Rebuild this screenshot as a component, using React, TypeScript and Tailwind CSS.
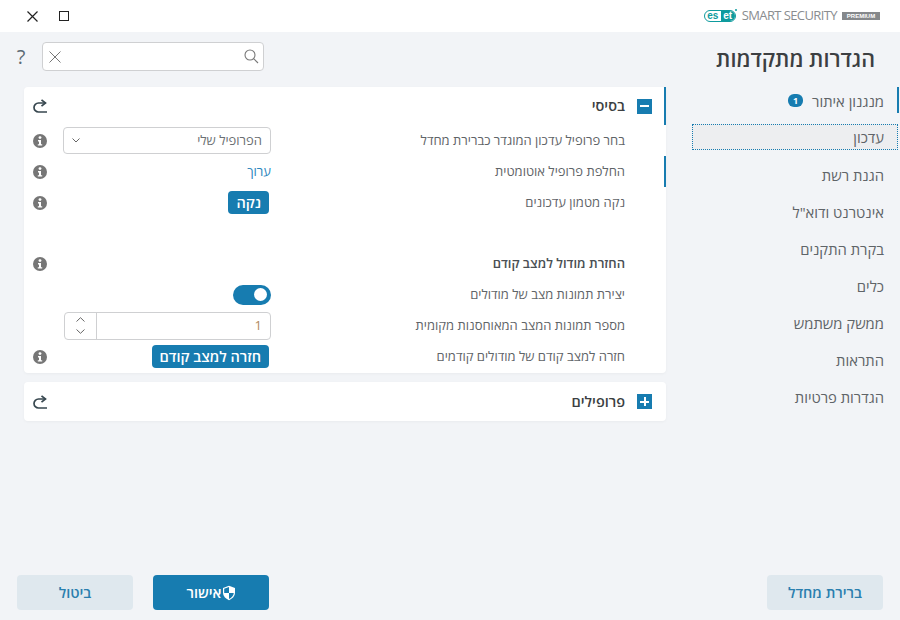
const BLUE = "bg-[#177cb0]";

function InfoIcon() {
  return (
    <svg width="14" height="14" viewBox="0 0 14 14" className="shrink-0">
      <circle cx="7" cy="7" r="7" fill="#767676" />
      <circle cx="7" cy="3.6" r="1.4" fill="#fff" />
      <path d="M5 6h3v4.2h1.2v1.4H4.8v-1.4H6V7.400H5z" fill="#fff" />
    </svg>
  );
}

function ResetIcon() {
  return (
    <svg width="14" height="14" viewBox="0 0 14 14" fill="none" stroke="#37474f" strokeWidth="1.7" className="shrink-0">
      <path d="M14 13H5.500A4.500 4.500 0 0 1 5.500 4H12.500" />
      <path d="M8.500 .8 12.500 4 8.500 7.200" />
    </svg>
  );
}

function Row({
  label,
  bold,
  marked,
  info,
  short,
  children,
}: {
  label?: string;
  bold?: boolean;
  marked?: boolean;
  info?: boolean;
  short?: boolean;
  children?: React.ReactNode;
}) {
  return (
    <div className={`relative flex items-center pr-[41px] pl-[9px] ${short ? "h-[30px]" : "h-[31px]"}`}>
      {marked && <div className={`absolute top-0 right-0 h-[31px] w-[2px] ${BLUE}`} />}
      <div className={`w-[354px] text-[13px] ${bold ? "font-semibold text-[#4a4f54]" : "text-[#5f6468]"}`}>{label}</div>
      <div className="flex w-[208px] items-center">{children}</div>
      <div className="mr-[16px] w-[14px]">{info && <InfoIcon />}</div>
    </div>
  );
}

function Button({ children }: { children: React.ReactNode }) {
  return (
    <button className={`mr-[2px] h-[23px] rounded-[4px] ${BLUE} px-[8px] text-[14.500px] leading-[23px] font-semibold text-white`}>
      {children}
    </button>
  );
}

const sideItems = ["הגנת רשת", 'אינטרנט ודוא"ל', "בקרת התקנים", "כלים", "ממשק משתמש", "התראות", "הגדרות פרטיות"];

export default function App() {
  return (
    <div dir="rtl" className="flex h-[620px] w-[900px] flex-col overflow-hidden bg-[#f2f4f7] font-['Open_Sans',sans-serif]">
      {/* title bar */}
      <div className="flex h-[32px] items-center justify-between bg-white pr-[20px] pl-[27px]">
        <div dir="ltr" className="flex items-center">
          <div className="relative flex h-[12px] w-[32px] items-center rounded-[6px] border border-[#0e9b9e] font-['Liberation_Sans',sans-serif] text-[10px] leading-none font-bold">
            <span className="w-[16px] text-center text-[#0e9b9e]">es</span>
            <span className="flex h-full flex-1 items-center justify-center rounded-r-[5px] bg-[#0e9b9e] text-white">et</span>
            <span className="absolute -top-[2px] -right-[2px] h-[2px] w-[2px] rounded-full bg-[#0e9b9e]" />
          </div>
          <span className="ml-[6px] text-[13px] tracking-[-0.6px] text-[#8a8d90]">SMART SECURITY</span>
          <span className="ml-[5px] h-[8px] w-[38px] bg-[#85888b] text-center font-['Liberation_Sans',sans-serif] text-[6px] leading-[8px] font-bold text-white">PREMIUM</span>
        </div>
        <div dir="ltr" className="flex items-center gap-[21px]">
          <svg width="11" height="11" viewBox="0 0 11 11" stroke="#222" strokeWidth="1.2">
            <path d="M0.500 0.500 10.500 10.500M10.500 0.500 0.500 10.500" />
          </svg>
          <div className="h-[10px] w-[10px] border border-[#222]" />
        </div>
      </div>

      {/* heading and search */}
      <div className="flex h-[55px] items-center justify-between pr-[25px] pl-[15px]">
        <h1 className="text-[21.500px] font-semibold text-[#3c3f42]">הגדרות מתקדמות</h1>
        <div dir="ltr" className="-mt-[6px] flex items-center">
          <span className="w-[12px] text-center text-[20px] leading-none text-[#5d6b75]">?</span>
          <div className="ml-[15px] flex h-[29px] w-[222px] items-center justify-between rounded-[4px] border border-[#cfd0d2] bg-white pr-[4px] pl-[6px]">
            <svg width="12" height="12" viewBox="0 0 12 12" stroke="#777" strokeWidth="1">
              <path d="M0.500 0.500 11.500 11.500M11.500 0.500 0.500 11.500" />
            </svg>
            <svg width="15" height="15" viewBox="0 0 15 15" fill="none" stroke="#777" strokeWidth="1.100">
              <circle cx="6" cy="6" r="5" />
              <path d="M9.600 9.600 14 14" />
            </svg>
          </div>
        </div>
      </div>

      {/* content */}
      <div className="flex flex-1">
        <nav className="flex w-[208px] flex-col gap-[11px] text-[14.800px] text-[#5f6468]">
          <div className="mr-px flex h-[26px] items-center border-r-[2px] border-[#177cb0] pt-[2px] pr-[13px]">
            <span>מנגנון איתור</span>
            <span className={`mr-[9px] -mt-[2px] h-[13px] w-[15px] rounded-[6px] ${BLUE} text-center text-[9px] leading-[13px] font-bold text-white`}>1</span>
          </div>
          <div className="mr-[2px] flex h-[26px] items-center border border-dotted border-[#177cb0] bg-[#edeef0] pt-[1px] pr-[13px]">עדכון</div>
          {sideItems.map((item) => (
            <div key={item} className="flex h-[26px] items-center pt-[2px] pr-[16px]">
              {item}
            </div>
          ))}
        </nav>
        <div className="mr-[26px] flex w-[642px] flex-col gap-[9px]">
          <section className="rounded-[4px] bg-white pb-[1px] shadow-[0_1px_3px_rgba(0,0,0,0.04)]">
            <div className="relative flex h-[38px] items-center pr-[14px] pl-[9px]">
              <div className={`absolute top-0 right-0 h-[38px] w-[2px] ${BLUE}`} />
              <div className={`flex h-[15px] w-[15px] items-center justify-center ${BLUE}`}>
                <div className="h-[2px] w-[9px] bg-white" />
              </div>
              <span className="mr-[12px] flex-1 text-[14.500px] font-semibold text-[#3c3f42]">בסיסי</span>
              <ResetIcon />
            </div>
            <Row label="בחר פרופיל עדכון המוגדר כברירת מחדל" info>
              <div className="flex h-[27px] w-full items-center justify-between rounded-[4px] border border-[#cfd0d2] px-[8px] text-[13px] text-[#6b6f73]">
                <span>הפרופיל שלי</span>
                <svg width="8" height="5" viewBox="0 0 8 5" fill="none" stroke="#666">
                  <path d="M0.500 0.500 4 4 7.500 0.500" />
                </svg>
              </div>
            </Row>
            <Row label="החלפת פרופיל אוטומטית" marked info>
              <span className="text-[13px] text-[#2b86bd]">ערוך</span>
            </Row>
            <Row label="נקה מטמון עדכונים" info>
              <Button>נקה</Button>
            </Row>
            <Row short />
            <Row label="החזרת מודול למצב קודם" bold info />
            <Row label="יצירת תמונות מצב של מודולים">
              <div className={`relative h-[20px] w-[38px] rounded-[10px] ${BLUE}`}>
                <div className="absolute top-[3.500px] left-[21px] h-[13px] w-[13px] rounded-full bg-white" />
              </div>
            </Row>
            <Row label="מספר תמונות המצב המאוחסנות מקומית">
              <div className="flex h-[28px] w-[207px] items-center rounded-[4px] border border-[#cfd0d2]">
                <span className="flex-1 pr-[8px] text-[13px] text-[#b08a60]">1</span>
                <div className="flex h-full w-[32px] flex-col items-center justify-center gap-[7px] border-r border-[#cfd0d2]">
                  <svg width="9" height="5" viewBox="0 0 9 5" fill="none" stroke="#666">
                    <path d="M0.500 4.500 4.500 0.700 8.500 4.500" />
                  </svg>
                  <svg width="9" height="5" viewBox="0 0 9 5" fill="none" stroke="#666">
                    <path d="M0.500 0.500 4.500 4.300 8.500 0.500" />
                  </svg>
                </div>
              </div>
            </Row>
            <Row label="חזרה למצב קודם של מודולים קודמים" info>
              <Button>חזרה למצב קודם</Button>
            </Row>
          </section>
          <section className="flex h-[39px] items-center rounded-[4px] bg-white pr-[14px] pl-[9px] shadow-[0_1px_3px_rgba(0,0,0,0.04)]">
            <div className={`relative h-[15px] w-[15px] ${BLUE}`}>
              <div className="absolute top-[6.500px] left-[3px] h-[2px] w-[9px] bg-white" />
              <div className="absolute top-[3px] left-[6.500px] h-[9px] w-[2px] bg-white" />
            </div>
            <span className="mr-[12px] flex-1 text-[14.500px] font-semibold text-[#3c3f42]">פרופילים</span>
            <ResetIcon />
          </section>
        </div>
      </div>

      {/* footer */}
      <div className="flex h-[45px] items-start justify-between px-[17px]">
        <button className="h-[35px] w-[116px] rounded-[4px] bg-[#dfe8ee] text-[14.500px] font-semibold text-[#2b7fae]">ברירת מחדל</button>
        <div dir="ltr" className="flex gap-[20px]">
          <button className="h-[35px] w-[116px] rounded-[4px] bg-[#dfe8ee] text-[14.500px] font-semibold text-[#2b7fae]">ביטול</button>
          <button className={`flex h-[35px] w-[116px] items-center justify-center rounded-[4px] ${BLUE} text-[14.500px] font-semibold text-white`}>
            <span dir="rtl">אישור</span>
            <svg width="14" height="16" viewBox="0 0 14 16">
              <path d="M7 0.800 13 3v4.500c0 3.600-2.500 6.200-6 7.700-3.500-1.500-6-4.100-6-7.700V3z" fill="#fff" />
              <path d="M7 2v6H2.200v-.600V3.800zM7 8h4.800C11.500 10.700 9.600 12.800 7 14z" fill="#177cb0" />
            </svg>
          </button>
        </div>
      </div>
    </div>
  );
}
